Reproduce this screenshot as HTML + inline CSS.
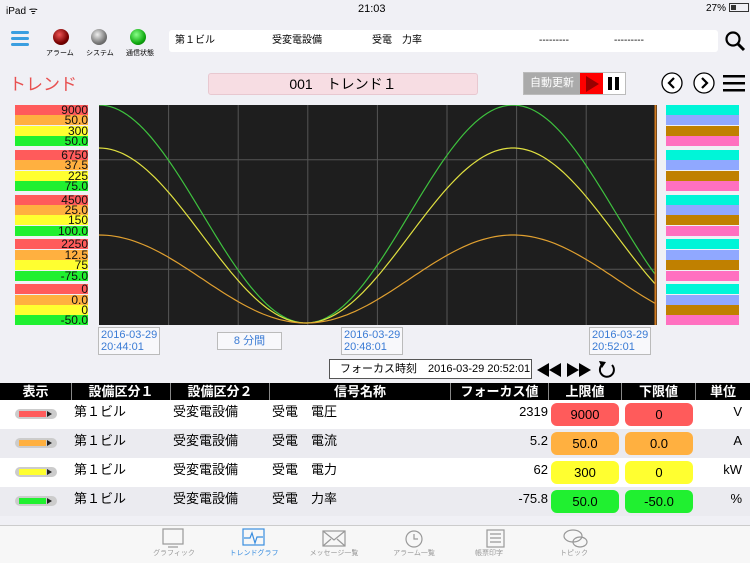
<!DOCTYPE html>
<html><head><meta charset="utf-8"><style>
*{margin:0;padding:0;box-sizing:border-box}
body{width:750px;height:563px;background:#f0f0f5;font-family:"Liberation Sans","Noto Sans CJK JP",sans-serif;position:relative;overflow:hidden;color:#000}
.a{position:absolute}
.lv{position:absolute;left:15px;width:73px;height:10px;font-size:12px;line-height:10px;text-align:right;color:#111;overflow:visible}
.rv{position:absolute;left:666px;width:73px;height:10px}
.hd{position:absolute;top:383px;height:17px;background:#000;color:#fff;font-size:13px;font-weight:bold;text-align:center;line-height:17px;border-right:1px solid #888}
.row{position:absolute;left:0;width:750px;height:29px;font-size:13px}
.row div{position:absolute;top:0;line-height:24px}
.pill{border-radius:6px;text-align:center;width:68px;height:23px;top:3px!important;line-height:23px!important}
.tab{position:absolute;top:548px;font-size:7px;color:#999;text-align:center;width:60px}
.ts{position:absolute;font-size:11px;color:#3a7bd5;border:1px solid #bbb;background:#f8f8fb;line-height:12px;padding:1px 2px}
</style></head><body>
<div class="a" style="left:6px;top:3px;font-size:10px">iPad ᯤ</div>
<div class="a" style="left:358px;top:3px;font-size:11px">21:03</div>
<div class="a" style="left:706px;top:3px;font-size:10px">27% <span style="display:inline-block;width:20px;height:9px;border:1px solid #333;vertical-align:-1px;position:relative"><span style="position:absolute;left:1px;top:1px;width:5px;height:5px;background:#333"></span></span></div>
<div class="a" style="left:11px;top:31px;width:18px;height:3px;background:#3a9ee0;box-shadow:0 6px 0 #3a9ee0,0 12px 0 #3a9ee0;border-radius:2px"></div>
<div class="a" style="left:53px;top:29px;width:16px;height:16px;border-radius:50%;background:radial-gradient(circle at 40% 35%,#e55,#700 60%,#400)"></div>
<div class="a" style="left:91px;top:29px;width:16px;height:16px;border-radius:50%;background:radial-gradient(circle at 40% 35%,#eee,#777 60%,#444)"></div>
<div class="a" style="left:130px;top:29px;width:16px;height:16px;border-radius:50%;background:radial-gradient(circle at 40% 35%,#8f8,#1a1 60%,#050)"></div>
<div class="a" style="left:46px;top:48px;font-size:7px">アラーム</div>
<div class="a" style="left:86px;top:48px;font-size:7px">システム</div>
<div class="a" style="left:126px;top:48px;font-size:7px">通信状態</div>
<div class="a" style="left:169px;top:30px;width:549px;height:22px;background:#fff;border-radius:3px;font-size:10px;line-height:22px">
<span class="a" style="left:6px">第１ビル</span><span class="a" style="left:103px">受変電設備</span><span class="a" style="left:203px">受電　力率</span><span class="a" style="left:370px">---------</span><span class="a" style="left:445px">---------</span></div>
<svg class="a" style="left:724px;top:30px" width="22" height="22"><circle cx="9" cy="9" r="6.5" fill="none" stroke="#000" stroke-width="2.2"/><line x1="14" y1="14" x2="20" y2="20" stroke="#000" stroke-width="3"/></svg>
<div class="a" style="left:9px;top:70px;font-size:17px;color:#e85050">トレンド</div>
<div class="a" style="left:208px;top:73px;width:270px;height:22px;background:#f7dde3;border:1px solid #e8c8d0;border-radius:3px;text-align:center;font-size:14px;line-height:21px">001　トレンド１</div>
<div class="a" style="left:523px;top:72px;width:103px;height:23px;border:1px solid #bbb;background:#fff">
<div class="a" style="left:0;top:0;width:56px;height:21px;background:#aaa;color:#fff;font-size:11px;line-height:21px;text-align:center">自動更新</div>
<div class="a" style="left:56px;top:0;width:23px;height:21px;background:#f00"></div>
<svg class="a" style="left:60px;top:3px" width="16" height="16"><polygon points="2,0 15,8 2,16" fill="#900"/></svg>
<div class="a" style="left:84px;top:4px;width:4px;height:13px;background:#000;box-shadow:7px 0 0 #000"></div></div>
<svg class="a" style="left:660px;top:72px" width="90" height="24"><circle cx="12" cy="11" r="10" fill="#fff" stroke="#000" stroke-width="1.3"/><path d="M14 6 L9 11 L14 16" fill="none" stroke="#000" stroke-width="2.2"/><circle cx="44" cy="11" r="10" fill="#fff" stroke="#000" stroke-width="1.3"/><path d="M42 6 L47 11 L42 16" fill="none" stroke="#000" stroke-width="2.2"/><rect x="63" y="3" width="22" height="2.5" fill="#000"/><rect x="63" y="10" width="22" height="2.5" fill="#000"/><rect x="63" y="17" width="22" height="2.5" fill="#000"/></svg>
<div id="lv"></div>
<svg class="a" style="left:99px;top:105px" width="558" height="220" id="ch"><rect width="558" height="220" fill="#1e1e1e"/><line x1="556.5" y1="0" x2="556.5" y2="220" stroke="#d07a20" stroke-width="2"/></svg>
<div class="ts" style="left:98px;top:327px">2016-03-29<br>20:44:01</div>
<div class="ts" style="left:217px;top:332px;width:65px;text-align:center;padding:2px">8 分間</div>
<div class="ts" style="left:341px;top:327px">2016-03-29<br>20:48:01</div>
<div class="ts" style="left:589px;top:327px">2016-03-29<br>20:52:01</div>
<div class="a" style="left:329px;top:359px;width:203px;height:20px;border:1px solid #555;background:#fff;font-size:11px;line-height:18px;padding-left:10px">フォーカス時刻　2016-03-29 20:52:01</div>
<svg class="a" style="left:535px;top:359px" width="85" height="22"><polygon points="14,4 2,11 14,18" fill="#000"/><polygon points="26,4 14,11 26,18" fill="#000"/><polygon points="32,4 44,11 32,18" fill="#000"/><polygon points="44,4 56,11 44,18" fill="#000"/><path d="M68 5 A7 7 0 1 0 77 6" fill="none" stroke="#000" stroke-width="2"/><polygon points="64,2 71,3 67,9" fill="#000"/></svg>
<div class="hd" style="left:0;width:72px">表示</div>
<div class="hd" style="left:72px;width:99px">設備区分１</div>
<div class="hd" style="left:171px;width:99px">設備区分２</div>
<div class="hd" style="left:270px;width:181px">信号名称</div>
<div class="hd" style="left:451px;width:98px">フォーカス値</div>
<div class="hd" style="left:549px;width:73px">上限値</div>
<div class="hd" style="left:622px;width:74px">下限値</div>
<div class="hd" style="left:696px;width:54px;border:0">単位</div>
<div id="rows"></div>
<div class="a" style="left:0;top:525px;width:750px;height:38px;background:#f7f7f7;border-top:1px solid #ccc"></div>
<svg class="a" style="left:160px;top:528px" width="440" height="22" fill="none" stroke="#999" stroke-width="1.2">
<rect x="3" y="1" width="20" height="15"/><line x1="8" y1="19" x2="18" y2="19"/>
<rect x="83" y="1" width="21" height="16" stroke="#3a8ee0"/><path d="M84 10 H90 L92 5 L95 15 L97 9 L103 9" stroke="#3a8ee0"/>
<rect x="163" y="3" width="22" height="15"/><path d="M163 3 L174 12 L185 3 M163 18 L171 11 M185 18 L177 11"/>
<circle cx="254" cy="11" r="8"/><path d="M254 6 V11 H258"/>
<rect x="327" y="2" width="17" height="17"/><path d="M330 6 H341 M330 10 H341 M330 14 H341"/>
<ellipse cx="413" cy="8" rx="9" ry="6"/><ellipse cx="420" cy="14" rx="7" ry="5"/></svg>
<div class="tab" style="left:144px">グラフィック</div>
<div class="tab" style="left:224px;color:#3a8ee0">トレンドグラフ</div>
<div class="tab" style="left:304px">メッセージ一覧</div>
<div class="tab" style="left:384px">アラーム一覧</div>
<div class="tab" style="left:459px">帳票印字</div>
<div class="tab" style="left:544px">トピック</div>
<script>
var cols=["#ff5b5b","#ffb040","#ffff30","#20f030"],rc=["#00f5d8","#90a8ff","#c08000","#ff70c0"];
var vals=[["9000","50.0","300","50.0"],["6750","37.5","225","75.0"],["4500","25.0","150","100.0"],["2250","12.5","75","-75.0"],["0","0.0","0","-50.0"]];
var h="";
for(var g=0;g<5;g++)for(var i=0;i<4;i++){var y=Math.round(105+g*44.8+i*10.4);h+='<div class="lv" style="top:'+y+'px;background:'+cols[i]+'">'+vals[g][i]+'</div>';h+='<div class="rv" style="top:'+(y)+'px;background:'+rc[i]+'"></div>';}
document.getElementById("lv").innerHTML=h;
var s="",ch=document.getElementById("ch");
for(var k=1;k<8;k++)s+='<line x1="'+(k*69.6)+'" y1="0" x2="'+(k*69.6)+'" y2="220" stroke="#555" stroke-width="1"/>';
for(var k=1;k<4;k++)s+='<line x1="0" y1="'+(k*54.75)+'" x2="556" y2="'+(k*54.75)+'" stroke="#555" stroke-width="1"/>';
[[218,"#3ec23e"],[175,"#e0e040"],[88,"#e0a030"]].forEach(function(c){var p="";for(var x=0;x<=556;x+=4){var X=x+99;var y=218-c[0]*(1+Math.cos(2*Math.PI*(X-513)/414))/2;p+=(x?"L":"M")+x+" "+y.toFixed(1);}s+='<path d="'+p+'" fill="none" stroke="'+c[1]+'" stroke-width="1.2"/>';});
ch.innerHTML=ch.innerHTML.replace('<line x1="556.5"',s+'<line x1="556.5"');
var R=[["電圧","2319","9000","0","V"],["電流","5.2","50.0","0.0","A"],["電力","62","300","0","kW"],["力率","-75.8","50.0","-50.0","%"]],r="";
R.forEach(function(d,i){var y=400+i*29;r+='<div class="row" style="top:'+y+'px;background:'+(i%2?"#ebebf0":"#fff")+'">'+
'<div style="left:15px;top:9px;width:42px;height:10px;border-radius:5px;background:#ccc"></div><div style="left:19px;top:11px;width:27px;height:6px;background:'+cols[i]+'"></div><div style="left:47px;top:11px;width:0;height:0;border-left:5px solid #222;border-top:3px solid transparent;border-bottom:3px solid transparent"></div>'+
'<div style="left:74px">第１ビル</div><div style="left:173px">受変電設備</div><div style="left:272px">受電　'+d[0]+'</div>'+
'<div style="right:202px">'+d[1]+'</div><div class="pill" style="left:551px;background:'+cols[i]+'">'+d[2]+'</div><div class="pill" style="left:625px;background:'+cols[i]+'">'+d[3]+'</div><div style="right:8px">'+d[4]+'</div></div>';});
document.getElementById("rows").innerHTML=r;
</script>
</body></html>
